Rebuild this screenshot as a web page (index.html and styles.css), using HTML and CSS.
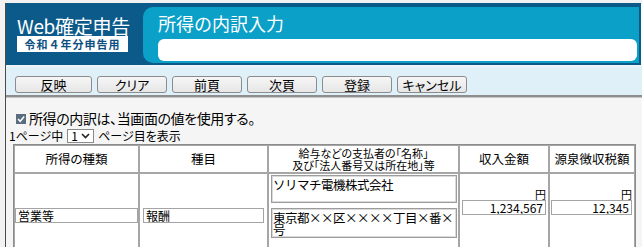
FILE: index.html
```html
<!DOCTYPE html>
<html lang="ja">
<head>
  <meta charset="UTF-8">
  <title>所得の内訳入力</title>
  <link rel="stylesheet" href="styles.css">
</head>
<body>
  <div class="page">
    <header class="site-header">
      <div class="brand">
        <div class="brand-name">Web確定申告</div>
        <div class="brand-year">令和４年分申告用</div>
      </div>
      <div class="title-panel">
        <h1>所得の内訳入力</h1>
        <div class="title-bar"></div>
      </div>
    </header>

    <div class="toolbar">
      <button class="btn btn-first">反映</button>
      <button class="btn">クリア</button>
      <button class="btn">前頁</button>
      <button class="btn">次頁</button>
      <button class="btn">登録</button>
      <button class="btn">キャンセル</button>
    </div>

    <label class="use-check">
      <svg class="cb" width="10" height="10" viewBox="0 0 10 10">
        <rect x="0" y="0" width="10" height="10" fill="#5b6b80"/>
        <polyline points="2,5 4.2,7.3 8.2,2.6" fill="none" stroke="#fff" stroke-width="1.5"/>
      </svg>
      所得の内訳は、当画面の値を使用する。
    </label>

    <div class="pager">
      1ページ中
      <span class="page-select">1
        <svg width="9" height="6" viewBox="0 0 9 6"><polyline points="1,1 4.5,4.5 8,1" fill="none" stroke="#222" stroke-width="1.6"/></svg>
      </span>
      ページ目を表示
    </div>

    <table class="detail">
      <colgroup>
        <col class="c-kind">
        <col class="c-item">
        <col class="c-payer">
        <col class="c-income">
        <col class="c-tax">
      </colgroup>
      <tr class="head-row">
        <th>所得の種類</th>
        <th>種目</th>
        <th class="th-payer">給与などの支払者の「名称」<br>及び「法人番号又は所在地」等</th>
        <th>収入金額</th>
        <th>源泉徴収税額</th>
      </tr>
      <tr class="body-row">
        <td class="td-kind"><input class="field" type="text" value="営業等" readonly></td>
        <td class="td-item"><input class="field" type="text" value="報酬" readonly></td>
        <td class="td-payer">
          <textarea class="box box-name" readonly>ソリマチ電機株式会社</textarea>
          <textarea class="box box-addr" readonly>東京都××区××××丁目×番×
号</textarea>
        </td>
        <td class="td-money">
          <div class="yen">円</div>
          <input class="field num" type="text" value="1,234,567" readonly>
        </td>
        <td class="td-money td-tax">
          <div class="yen">円</div>
          <input class="field num" type="text" value="12,345" readonly>
        </td>
      </tr>
      <tr class="body-row">
        <td class="td-kind"></td>
        <td class="td-item"></td>
        <td class="td-payer">
          <textarea class="box box-name" readonly></textarea>
        </td>
        <td class="td-money"></td>
        <td class="td-money td-tax"></td>
      </tr>
    </table>
  </div>
</body>
</html>
```

FILE: styles.css
```css
html, body {
  margin: 0;
  padding: 0;
  overflow: hidden;
}
body {
  background: #f2f2f2;
  font-family: "Noto Sans CJK JP", "Liberation Sans", sans-serif;
  color: #000;
}
.page {
  margin: 3px 0 0 5px;
  border-left: 1px solid #4b4b4b;
  background: #f5f5f5;
  min-height: 300px;
}

/* header */
.site-header {
  display: flex;
  background: #0c5a8a;
  padding: 4px 2px 2px 0;
  margin-right: 1px;
}
.brand {
  width: 137px;
  flex: none;
  box-sizing: border-box;
  padding: 9px 0 0 11px;
}
.brand-name {
  color: #fff;
  font-size: 19px;
  line-height: 20px;
  letter-spacing: -0.3px;
}
.brand-year {
  width: 111px;
  height: 16px;
  background: #fff;
  color: #0b4f82;
  font-size: 11px;
  font-weight: bold;
  line-height: 16px;
  text-align: center;
  letter-spacing: 1px;
}
.title-panel {
  flex: 1;
  background: #0aa0c8;
  border-radius: 10px 0 0 10px;
  padding: 3px 2px 2px 15px;
}
.title-panel h1 {
  margin: 0;
  color: #fff;
  font-size: 18px;
  font-weight: normal;
  line-height: 26px;
}
.title-bar {
  margin-top: 3px;
  height: 22px;
  background: #fff;
  border-radius: 6px;
}

/* toolbar */
.toolbar {
  display: flex;
  gap: 5px;
  background: #e0f0f8;
  border-top: 2px solid #eef4f7;
  border-bottom: 2px solid #8e8e8e;
  box-shadow: 0 1px 0 #c6c6c6;
  padding: 9px 0 2px 9px;
}
.btn {
  width: 70px;
  height: 17px;
  padding: 0;
  border: 1px solid #8c8c8c;
  border-radius: 3px;
  background: linear-gradient(#f6f6f6, #e6e6e6);
  font-family: inherit;
  font-size: 13px;
  line-height: 15px;
  font-feature-settings: "palt";
  color: #000;
}
.btn-first {
  width: 77px;
}

/* options */
.use-check {
  display: flex;
  align-items: center;
  gap: 3px;
  margin: 13px 0 2px 10px;
  font-size: 14px;
  line-height: 17px;
  letter-spacing: -0.4px;
  font-feature-settings: "palt";
}
.cb {
  flex: none;
}
.pager {
  display: flex;
  align-items: center;
  margin-left: 3px;
  font-size: 12px;
  line-height: 14px;
  font-feature-settings: "palt";
}
.page-select {
  display: inline-flex;
  align-items: center;
  gap: 3px;
  box-sizing: border-box;
  height: 14px;
  width: 27px;
  margin: 0 4px;
  padding: 0 3px;
  border: 1px solid #8a8a8a;
  background: #fff;
  font-size: 12px;
}

/* table */
.detail {
  margin: 1px 0 0 7px;
  width: 623px;
  table-layout: fixed;
  border-collapse: separate;
  border-spacing: 0;
  border: 1px solid #8c8c8c;
  background: #fff;
}
.c-kind { width: 125px; }
.c-item { width: 129px; }
.c-payer { width: 191px; }
.c-income { width: 90px; }
.c-tax { width: 86px; }
.detail th,
.detail td {
  border: 1px solid #a6a6a6;
  padding: 0;
}
.head-row th {
  height: 26px;
  font-size: 12.5px;
  font-weight: normal;
  line-height: 14px;
  font-feature-settings: "palt";
}
.detail .th-payer {
  font-size: 11px;
  line-height: 12px;
}
.body-row td {
  height: 68px;
}
.td-kind {
  padding: 0 2px;
  vertical-align: middle;
}
.detail .td-item {
  padding: 0 3px;
  vertical-align: middle;
}
.detail .td-payer {
  padding: 1px 1px 0 2px;
  vertical-align: top;
}
.detail .td-money {
  padding: 14px 2px 0 2px;
  vertical-align: top;
}
.detail .td-tax {
  padding: 14px 2px 0 1px;
}
.field {
  display: block;
  width: 100%;
  height: 15px;
  box-sizing: border-box;
  margin: 0;
  padding: 0 2px;
  border: 1px solid #a4a4a4;
  background: #fff;
  font-family: inherit;
  font-size: 12px;
  line-height: 13px;
  color: #000;
}
.num {
  text-align: right;
}
.yen {
  text-align: right;
  font-size: 11px;
  line-height: 12px;
}
.box {
  display: block;
  width: 100%;
  box-sizing: border-box;
  margin: 0;
  padding: 3px 0 0 1px;
  border: 1px solid #9c9c9c;
  box-shadow: inset 0 0 0 1px #dadada;
  resize: none;
  overflow: hidden;
  background: #fff;
  font-family: inherit;
  font-size: 12.5px;
  line-height: 12px;
  letter-spacing: -0.5px;
  color: #000;
}
.box-name {
  height: 28px;
  margin-bottom: 5px;
}
.box-addr {
  height: 30px;
}
```
